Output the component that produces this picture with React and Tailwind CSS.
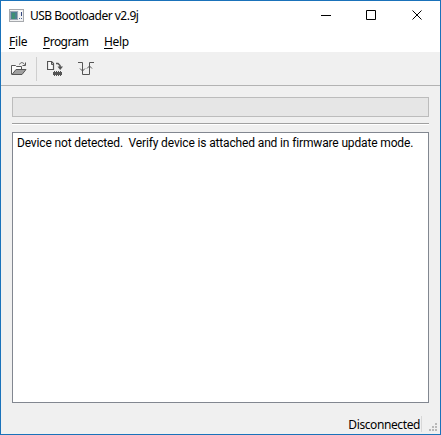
import React from "react";

function AppIcon() {
  return (
    <svg width="15" height="13" viewBox="0 0 15 13" shapeRendering="crispEdges">
      <rect width="15" height="13" fill="#a6a9ad" />
      <rect x="1" y="1" width="13" height="11" fill="#f0f1f2" />
      <rect x="1" y="2" width="8" height="9" fill="#9da7b5" />
      <rect x="2" y="3" width="6" height="7" fill="#4b7f91" />
      <rect x="3" y="4" width="3" height="6" fill="#3e8f73" />
      <rect x="10" y="2" width="3" height="1" fill="#fff" />
      <rect x="12" y="3" width="1" height="4" fill="#344780" />
      <rect x="10" y="9" width="1" height="1" fill="#50669a" />
      <rect x="12" y="9" width="1" height="1" fill="#50669a" />
    </svg>
  );
}

function OpenIcon() {
  return (
    <svg width="16" height="16" viewBox="0 0 16 16" fill="none" stroke="#555">
      <path d="M.5 13.500V4.500h4l1 1h5V8" fill="#fafafa" />
      <path d="M1 13.500L5 8.500h10l-4 5z" fill="#a0a0a0" />
      <path d="M8.500 3.500C9.500 1 12 1 13.500 3.500" />
      <path d="M14.500 1.500v3H11.500" />
    </svg>
  );
}

function ImportIcon() {
  return (
    <svg width="17" height="16" viewBox="0 0 17 16" fill="none" stroke="#555">
      <path d="M.5.5h4l2 2v6h-6z" strokeWidth="1.200" fill="#fafafa" />
      <path d="M4.500 1v2.500H6.500" />
      <path d="M9 2.500h2l2 2V7" strokeWidth="1.500" />
      <path d="M10.500 5.500h5.500L13.200 9z" fill="#555" stroke="none" />
      <path d="M6 11h9v3H6z" fill="#555" stroke="none" />
      <path d="M7.500 10v5M9.500 10v5M11.500 10v5M13.500 10v5" shapeRendering="crispEdges" />
    </svg>
  );
}

function ResetIcon() {
  return (
    <svg width="16" height="14" viewBox="0 0 16 14" fill="none" stroke="#555">
      <path d="M0 .5h4.500v12h7V.5H16" />
      <path d="M2 6.500l2.500 2.500L7 6.500M9 6.500l2.500-2.500L14 6.500" />
    </svg>
  );
}

function Menu({ first, rest, className }) {
  return (
    <div className={className}>
      <span className="underline underline-offset-2">{first}</span>{rest}
    </div>
  );
}

function Grip() {
  return (
    <svg width="8" height="8" viewBox="0 0 8 8" fill="#b9b9b9" shapeRendering="crispEdges">
      <path d="M6 0h2v2H6zM3 3h2v2H3zM6 3h2v2H6zM0 6h2v2H0zM3 6h2v2H3zM6 6h2v2H6z" />
    </svg>
  );
}

export default function App() {
  return (
    <div className="flex h-[435px] w-[441px] flex-col overflow-hidden border border-[#1a72ba] bg-[#f0f0f0] font-['Noto_Sans','Open_Sans',sans-serif] text-[12px] leading-4 whitespace-pre text-black">
      <header className="flex h-[30px] shrink-0 bg-white pl-2">
        <div className="pt-2"><AppIcon /></div>
        <div className="ml-1.5 flex-1 pt-[7px] tracking-[-0.5px]">USB Bootloader v2.9j</div>
        <svg width="102" height="10" viewBox="0 0 102 10" className="mt-[9px] mr-[17px]" fill="none" stroke="#000">
          <path d="M0 5.500h10" />
          <path d="M45.500.5h9v9h-9z" />
          <path d="M91.500.5l9 9M100.500.5l-9 9" />
        </svg>
      </header>
      <nav className="flex h-[22px] shrink-0 border-b border-[#f0f0f0] bg-white pt-[3px] pl-2">
        <Menu first="F" rest="ile" className="w-[34px] tracking-[-0.2px]" />
        <Menu first="P" rest="rogram" className="w-[61px] tracking-[-0.55px]" />
        <Menu first="H" rest="elp" className="tracking-[-0.3px]" />
      </nav>
      <div className="flex h-[33px] shrink-0 border-b border-[#b3b3b3] pl-2.5">
        <div className="w-[25px] pt-2"><OpenIcon /></div>
        <div className="mt-1 h-6 w-px bg-[#cfcfcf]" />
        <div className="ml-2.5 w-[31px] pt-2"><ImportIcon /></div>
        <div className="pt-[9px]"><ResetIcon /></div>
      </div>
      <main className="flex flex-1 flex-col px-[11px] pt-[11px]">
        <div className="h-5 border border-[#bcbcbc] bg-[#e6e6e6]" />
        <div className="mt-1.5 h-0.5 border-t border-b border-t-[#a0a0a0] border-b-white" />
        <div className="mt-[7px] h-[271px] border border-[#828790] bg-white pt-0.5 pl-1 font-[Roboto,sans-serif] tracking-[-0.145px]">
          Device not detected.  Verify device is attached and in firmware update mode.
        </div>
      </main>
      <footer className="flex h-[22px] shrink-0 justify-end pr-[3px]">
        <div className="mt-[5px] mr-px tracking-[-0.4px]">Disconnected</div>
        <div className="mt-1 mr-[7px] h-4 w-px bg-[#d7d7d7]" />
        <div className="mt-[11px]"><Grip /></div>
      </footer>
    </div>
  );
}
